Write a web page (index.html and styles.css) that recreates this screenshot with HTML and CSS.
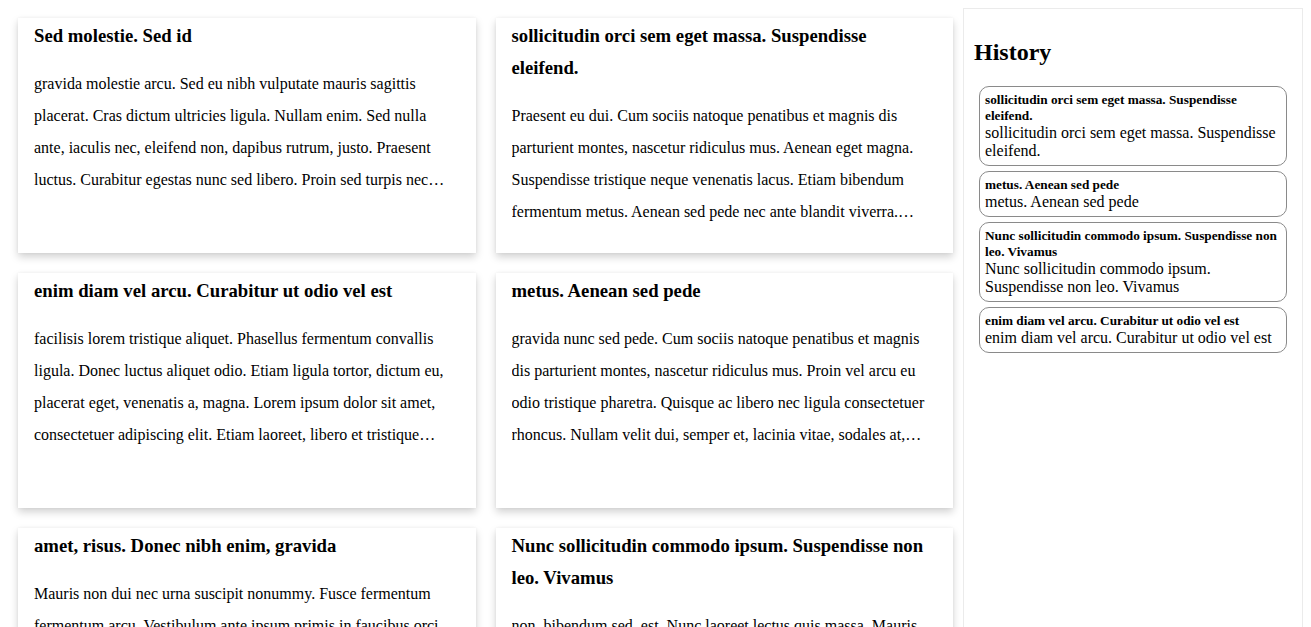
FILE: index.html
```html
<!DOCTYPE html>
<html lang="en">
<head>
<meta charset="utf-8">
<title>Notes</title>
<link rel="stylesheet" href="styles.css">
</head>
<body>
<div class="layout">
  <main class="main">
    <article class="card">
      <h3 class="card-title">Sed molestie. Sed id</h3>
      <p class="card-text">gravida molestie arcu. Sed eu nibh vulputate mauris sagittis placerat. Cras dictum ultricies ligula. Nullam enim. Sed nulla ante, iaculis nec, eleifend non, dapibus rutrum, justo. Praesent luctus. Curabitur egestas nunc sed libero. Proin sed turpis nec mauris blandit mattis. Cras eget nisi dictum augue malesuada malesuada.</p>
    </article>
    <article class="card">
      <h3 class="card-title">sollicitudin orci sem eget massa. Suspendisse eleifend.</h3>
      <p class="card-text">Praesent eu dui. Cum sociis natoque penatibus et magnis dis parturient montes, nascetur ridiculus mus. Aenean eget magna. Suspendisse tristique neque venenatis lacus. Etiam bibendum fermentum metus. Aenean sed pede nec ante blandit viverra. Donec tempus, lorem fringilla ornare placerat, orci lacus vestibulum lorem.</p>
    </article>
    <article class="card">
      <h3 class="card-title">enim diam vel arcu. Curabitur ut odio vel est</h3>
      <p class="card-text">facilisis lorem tristique aliquet. Phasellus fermentum convallis ligula. Donec luctus aliquet odio. Etiam ligula tortor, dictum eu, placerat eget, venenatis a, magna. Lorem ipsum dolor sit amet, consectetuer adipiscing elit. Etiam laoreet, libero et tristique pellentesque, tellus sem mollis dui, in sodales elit erat vitae risus.</p>
    </article>
    <article class="card">
      <h3 class="card-title">metus. Aenean sed pede</h3>
      <p class="card-text">gravida nunc sed pede. Cum sociis natoque penatibus et magnis dis parturient montes, nascetur ridiculus mus. Proin vel arcu eu odio tristique pharetra. Quisque ac libero nec ligula consectetuer rhoncus. Nullam velit dui, semper et, lacinia vitae, sodales at, velit. Pellentesque ultricies dignissim lacus.</p>
    </article>
    <article class="card">
      <h3 class="card-title">amet, risus. Donec nibh enim, gravida</h3>
      <p class="card-text">Mauris non dui nec urna suscipit nonummy. Fusce fermentum fermentum arcu. Vestibulum ante ipsum primis in faucibus orci luctus et ultrices posuere cubilia Curae; Phasellus ornare. Fusce mollis. Duis sit amet diam eu dolor egestas rhoncus.</p>
    </article>
    <article class="card">
      <h3 class="card-title">Nunc sollicitudin commodo ipsum. Suspendisse non leo. Vivamus</h3>
      <p class="card-text">non, bibendum sed, est. Nunc laoreet lectus quis massa. Mauris vestibulum, neque sed dictum eleifend, nunc risus varius orci, in consequat enim diam vel arcu. Curabitur ut odio vel est tempor bibendum.</p>
    </article>
  </main>
  <aside class="sidebar">
    <h2 class="sidebar-title">History</h2>
    <div class="history-item">
      <div class="history-head">sollicitudin orci sem eget massa. Suspendisse eleifend.</div>
      <div class="history-body">sollicitudin orci sem eget massa. Suspendisse eleifend.</div>
    </div>
    <div class="history-item">
      <div class="history-head">metus. Aenean sed pede</div>
      <div class="history-body">metus. Aenean sed pede</div>
    </div>
    <div class="history-item">
      <div class="history-head">Nunc sollicitudin commodo ipsum. Suspendisse non leo. Vivamus</div>
      <div class="history-body">Nunc sollicitudin commodo ipsum. Suspendisse non leo. Vivamus</div>
    </div>
    <div class="history-item">
      <div class="history-head">enim diam vel arcu. Curabitur ut odio vel est</div>
      <div class="history-body">enim diam vel arcu. Curabitur ut odio vel est</div>
    </div>
  </aside>
</div>
</body>
</html>
```
FILE: styles.css
```css
html, body {
  background: #fff;
}
body {
  margin: 8px;
  font-family: "Liberation Serif", "Times New Roman", serif;
  color: #000;
}
.layout {
  display: flex;
  align-items: stretch;
  min-height: calc(100vh - 16px);
}
.main {
  flex: 1;
  min-width: 0;
  padding: 10px;
  display: grid;
  grid-template-columns: 1fr 1fr;
  gap: 20px;
  align-content: start;
}
.card {
  height: 235px;
  box-sizing: border-box;
  padding: 2px 16px 0;
  background: #fff;
  box-shadow: 0 4px 8px rgba(0, 0, 0, 0.18), 0 0 3px rgba(0, 0, 0, 0.05);
  overflow: hidden;
}
.card-title {
  margin: 0 0 16px;
  font-size: 18.72px;
  line-height: 32px;
  font-weight: bold;
}
.card-text {
  margin: 0;
  font-size: 16px;
  line-height: 32px;
  display: -webkit-box;
  -webkit-box-orient: vertical;
  -webkit-line-clamp: 4;
  overflow: hidden;
}
.sidebar {
  width: 340px;
  flex: 0 0 340px;
  box-sizing: border-box;
  border: 1px solid #ebebeb;
  padding: 10px;
}
.sidebar-title {
  font-size: 24px;
  font-weight: bold;
  margin: 20px 0;
}
.history-item {
  margin: 0 5px 5px;
  padding: 5px;
  border: 1px solid #8a8a8a;
  border-radius: 10px;
}
.history-head {
  font-size: 13.28px;
  line-height: 16px;
  font-weight: bold;
}
.history-body {
  font-size: 16px;
  line-height: 18px;
}
```
